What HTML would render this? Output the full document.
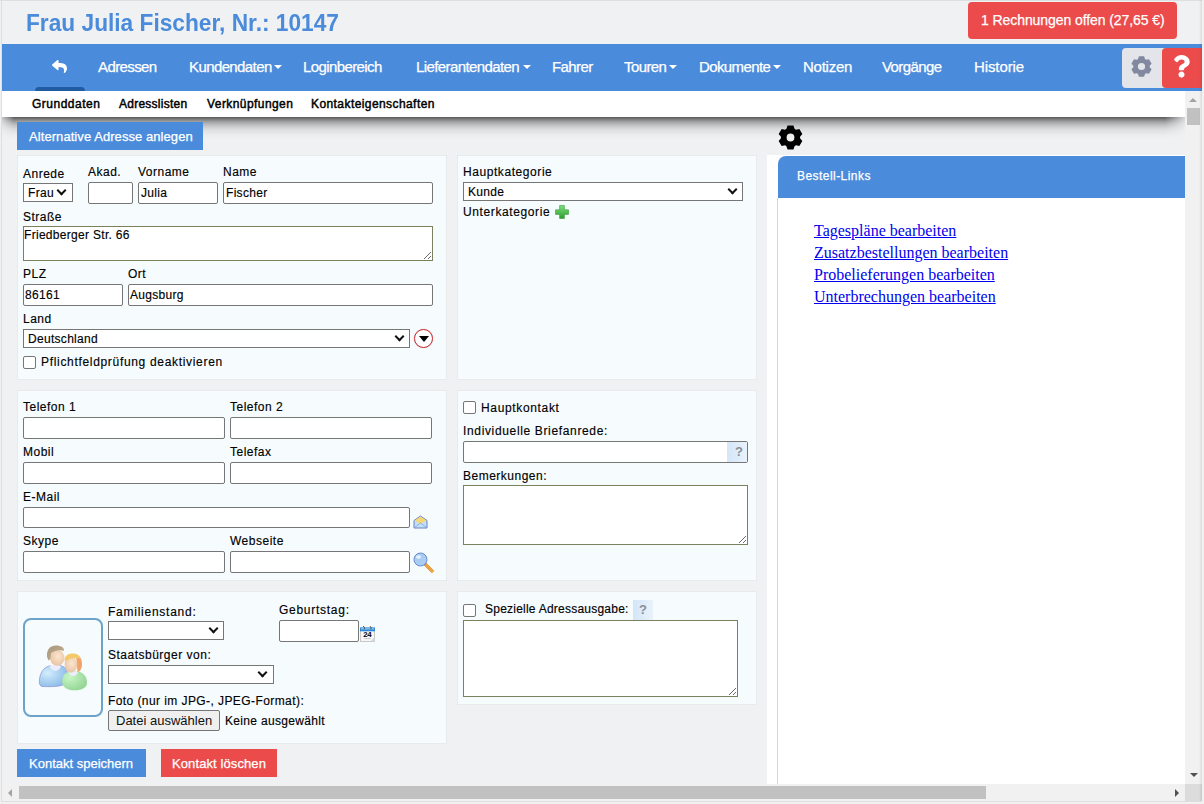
<!DOCTYPE html>
<html><head><meta charset="utf-8">
<style>
*{box-sizing:border-box}
html,body{margin:0;padding:0}
body{width:1204px;height:804px;overflow:hidden;position:relative;background:#f0f1f3;font-family:"Liberation Sans",sans-serif;color:#111}
.a{position:absolute}
.t{position:absolute;white-space:nowrap;line-height:14px;font-size:12px;letter-spacing:0.5px;color:#000;-webkit-text-stroke:0.15px #000}
.nav{position:absolute;top:59px;line-height:16px;font-size:15px;color:#fff;white-space:nowrap;letter-spacing:-0.6px;-webkit-text-stroke:0.25px #fff}
.sub{position:absolute;top:97px;line-height:14px;font-size:12px;font-weight:400;color:#000;white-space:nowrap;letter-spacing:0.25px;-webkit-text-stroke:0.45px #000}
.inp{position:absolute;background:#fff;border:1px solid #767676;border-radius:2px}
.sel{position:absolute;background:#fff;border:1px solid #767676}
.ta{position:absolute;background:#fff;border:1px solid #7b805f}
.panel{position:absolute;background:#f6fbfe;border:1px solid #e9eaeb}
.cb{position:absolute;width:13px;height:13px;border:1px solid #767676;border-radius:2px;background:#fff}
.caret{position:absolute;width:0;height:0;border-left:4px solid transparent;border-right:4px solid transparent;border-top:4px solid #fff}
.chev{position:absolute;width:7px;height:7px;border-right:2px solid #111;border-bottom:2px solid #111;transform:rotate(45deg)}
</style></head><body>
<!-- frame borders -->
<div class="a" style="left:0;top:0;width:1204px;height:1px;background:#dedfe1"></div>
<div class="a" style="left:1px;top:0;width:1px;height:804px;background:#dedede"></div>

<!-- header -->
<div class="a" style="left:26px;top:9px;font-size:24px;line-height:28px;font-weight:700;color:#4a8bdb;white-space:nowrap;transform:scaleX(0.946);transform-origin:0 0">Frau Julia Fischer, Nr.: 10147</div>
<div class="a" style="left:968px;top:2px;width:209px;height:37px;background:#eb4b4b;border-radius:4px"></div>
<div class="a" style="left:981px;top:12px;font-size:14px;line-height:16px;color:#fff;white-space:nowrap;letter-spacing:-0.08px;-webkit-text-stroke:0.25px #fff">1 Rechnungen offen (27,65 €)</div>

<!-- nav -->
<div class="a" style="left:2px;top:44px;width:1200px;height:47px;background:#4a8bdb"></div>
<div class="a" style="left:35px;top:87px;width:50px;height:4px;background:#215ca3;border-radius:4px 4px 0 0"></div>
<svg class="a" style="left:51.8px;top:59px" width="15" height="15" viewBox="0 0 512 512"><path fill="#fff" d="M8.309 189.836L184.313 37.851C199.719 24.546 224 35.347 224 56.015v80.053c160.629 1.839 288 34.032 288 186.258 0 61.441-39.581 122.309-83.333 154.132-13.653 9.931-33.111-2.533-28.077-18.631 45.344-145.012-21.507-183.51-176.59-185.742V360c0 20.7-24.3 31.453-39.687 18.164l-176.004-152c-11.071-9.562-11.086-26.753 0-36.328z"/></svg>
<div class="nav" style="left:98px">Adressen</div>
<div class="nav" style="left:189px">Kundendaten</div><div class="caret" style="left:274px;top:65px"></div>
<div class="nav" style="left:303px">Loginbereich</div>
<div class="nav" style="left:416px">Lieferantendaten</div><div class="caret" style="left:523px;top:65px"></div>
<div class="nav" style="left:552px">Fahrer</div>
<div class="nav" style="left:624px">Touren</div><div class="caret" style="left:669px;top:65px"></div>
<div class="nav" style="left:699px">Dokumente</div><div class="caret" style="left:773px;top:65px"></div>
<div class="nav" style="left:803px;letter-spacing:-0.25px">Notizen</div>
<div class="nav" style="left:882px">Vorgänge</div>
<div class="nav" style="left:974px;letter-spacing:-0.1px">Historie</div>
<div class="a" style="left:1122px;top:48px;width:44px;height:40px;background:#e4e5ea;border-radius:4px 0 0 4px"></div>
<svg class="a" style="left:1130.8px;top:56.1px" width="21" height="21" viewBox="0 0 21 21"><path fill-rule="evenodd" fill="#8288a0" d="M7.01 3.08 L7.93 0.32 L13.07 0.32 L13.99 3.08 L15.19 3.77 L18.03 3.18 L20.60 7.64 L18.67 9.81 L18.67 11.19 L20.60 13.36 L18.03 17.82 L15.19 17.23 L13.99 17.92 L13.07 20.68 L7.93 20.68 L7.01 17.92 L5.81 17.23 L2.97 17.82 L0.40 13.36 L2.33 11.19 L2.33 9.81 L0.40 7.64 L2.97 3.18 L5.81 3.77 Z M14.10 10.50 A3.6 3.6 0 1 0 6.90 10.50 A3.6 3.6 0 1 0 14.10 10.50 Z"/></svg>
<div class="a" style="left:1162px;top:48px;width:40px;height:40px;background:#eb4b4b;border-radius:4px 0 0 4px"></div>
<svg class="a" style="left:1172.6px;top:55.4px" width="17" height="22.7" viewBox="0 0 384 512" preserveAspectRatio="none"><path fill="#fff" d="M202.021 0C122.202 0 70.503 32.703 29.914 91.026c-7.363 10.58-5.093 25.086 5.178 32.874l43.138 32.709c10.373 7.865 25.132 6.026 33.253-4.148 25.049-31.381 43.63-49.449 82.757-49.449 30.764 0 68.816 19.799 68.816 49.631 0 22.552-18.617 34.134-48.993 51.164-35.423 19.86-82.299 44.576-82.299 106.405V320c0 13.255 10.745 24 24 24h72.471c13.255 0 24-10.745 24-24v-5.773c0-42.86 125.268-44.645 125.268-160.627C377.504 66.256 286.902 0 202.021 0zM192 373.459c-38.196 0-69.271 31.075-69.271 69.271 0 38.195 31.075 69.27 69.271 69.27s69.271-31.075 69.271-69.271-31.075-69.27-69.271-69.27z"/></svg>

<!-- subnav -->
<div class="a" style="left:2px;top:117px;width:1183px;height:22px;background:linear-gradient(to bottom,rgba(0,0,0,.63) 0px,rgba(0,0,0,.43) 3px,rgba(0,0,0,.28) 6px,rgba(0,0,0,.17) 9px,rgba(0,0,0,.07) 13px,rgba(0,0,0,.02) 18px,rgba(0,0,0,0) 22px);-webkit-mask-image:linear-gradient(to right,rgba(0,0,0,.3) 0px,#000 12px,#000 1163px,rgba(0,0,0,.2) 1183px)"></div>
<div class="a" style="left:2px;top:91px;width:1183px;height:26px;background:#fff"></div>
<div class="sub" style="left:32px;letter-spacing:0.5px">Grunddaten</div>
<div class="sub" style="left:119px">Adresslisten</div>
<div class="sub" style="left:207px;letter-spacing:0.43px">Verknüpfungen</div>
<div class="sub" style="left:311px;letter-spacing:0.42px">Kontakteigenschaften</div>


<!-- content -->
<div class="a" style="left:17px;top:122px;width:186px;height:28px;background:#4a8bdb"></div>
<div class="a" style="left:29px;top:129px;font-size:13px;line-height:16px;color:#fff;white-space:nowrap;letter-spacing:0.07px;-webkit-text-stroke:0.25px #fff">Alternative Adresse anlegen</div>

<!-- panel 1 -->
<div class="panel" style="left:17px;top:155px;width:430px;height:225px"></div>
<div class="t" style="left:23px;top:167px">Anrede</div>
<div class="t" style="left:88px;top:165px">Akad.</div>
<div class="t" style="left:138px;top:165px">Vorname</div>
<div class="t" style="left:223px;top:165px">Name</div>
<div class="sel" style="left:23px;top:183px;width:50px;height:19px"></div>
<div class="t" style="left:28px;top:186px;letter-spacing:0.3px">Frau</div>
<div class="chev" style="left:58px;top:187px"></div>
<div class="inp" style="left:88px;top:182px;width:45px;height:22px"></div>
<div class="inp" style="left:138px;top:182px;width:80px;height:22px"></div>
<div class="t" style="left:141px;top:186px;letter-spacing:0.3px">Julia</div>
<div class="inp" style="left:223px;top:182px;width:210px;height:22px"></div>
<div class="t" style="left:226px;top:186px;letter-spacing:0.3px">Fischer</div>
<div class="t" style="left:23px;top:210px">Straße</div>
<div class="ta" style="left:23px;top:226px;width:410px;height:35px"></div>
<div class="t" style="left:24px;top:228px;letter-spacing:0.3px">Friedberger Str. 66</div>
<div class="t" style="left:23px;top:267px">PLZ</div>
<div class="t" style="left:128px;top:267px">Ort</div>
<div class="inp" style="left:23px;top:284px;width:100px;height:22px"></div>
<div class="t" style="left:25px;top:288px;letter-spacing:0.3px">86161</div>
<div class="inp" style="left:128px;top:284px;width:305px;height:22px"></div>
<div class="t" style="left:130px;top:288px;letter-spacing:0.3px">Augsburg</div>
<div class="t" style="left:23px;top:312px">Land</div>
<div class="sel" style="left:23px;top:329px;width:387px;height:19px"></div>
<div class="t" style="left:28px;top:332px;letter-spacing:0.3px">Deutschland</div>
<div class="chev" style="left:396px;top:333px"></div>
<div class="a" style="left:414px;top:329px;width:19px;height:19px;border:1.6px solid #d42a2e;border-radius:50%;background:#fff;box-shadow:0 0 1px rgba(0,0,0,.3)"></div>
<div class="a" style="left:418.5px;top:335.5px;width:0;height:0;border-left:5px solid transparent;border-right:5px solid transparent;border-top:6.5px solid #000"></div>
<div class="cb" style="left:23px;top:356px"></div>
<div class="t" style="left:41px;top:355px;letter-spacing:0.68px">Pflichtfeldprüfung deaktivieren</div>

<!-- panel 2 -->
<div class="panel" style="left:457px;top:155px;width:300px;height:225px"></div>
<div class="t" style="left:463px;top:165px;letter-spacing:0.57px">Hauptkategorie</div>
<div class="sel" style="left:463px;top:182px;width:280px;height:19px"></div>
<div class="t" style="left:468px;top:185px;letter-spacing:0.3px">Kunde</div>
<div class="chev" style="left:729px;top:186px"></div>
<div class="t" style="left:463px;top:205px;letter-spacing:0.61px">Unterkategorie</div>
<svg class="a" style="left:555px;top:205px" width="14" height="14" viewBox="0 0 14 14"><defs><linearGradient id="gp" x1="0" y1="0" x2="0" y2="1"><stop offset="0" stop-color="#7ee07e"/><stop offset="1" stop-color="#2c9c2c"/></linearGradient></defs><path d="M4.6 0.5h4.8v4.3h4.1v4.6h-4.1v4.1h-4.8v-4.1h-4.1v-4.6h4.1z" fill="url(#gp)" stroke="#3a9a3a" stroke-width="0.6"/></svg>

<!-- panel 3 -->
<div class="panel" style="left:17px;top:390px;width:430px;height:191px"></div>
<div class="t" style="left:23px;top:400px">Telefon 1</div>
<div class="t" style="left:230px;top:400px">Telefon 2</div>
<div class="inp" style="left:23px;top:417px;width:202px;height:22px"></div>
<div class="inp" style="left:230px;top:417px;width:202px;height:22px"></div>
<div class="t" style="left:23px;top:445px">Mobil</div>
<div class="t" style="left:230px;top:445px">Telefax</div>
<div class="inp" style="left:23px;top:462px;width:202px;height:22px"></div>
<div class="inp" style="left:230px;top:462px;width:202px;height:22px"></div>
<div class="t" style="left:23px;top:490px">E-Mail</div>
<div class="inp" style="left:23px;top:507px;width:387px;height:21px"></div>
<div class="t" style="left:23px;top:534px">Skype</div>
<div class="t" style="left:230px;top:534px">Webseite</div>
<div class="inp" style="left:23px;top:551px;width:202px;height:22px"></div>
<div class="inp" style="left:230px;top:551px;width:180px;height:22px"></div>

<!-- panel 4 -->
<div class="panel" style="left:457px;top:390px;width:300px;height:191px"></div>
<div class="cb" style="left:463px;top:401px"></div>
<div class="t" style="left:481px;top:401px;letter-spacing:0.65px">Hauptkontakt</div>
<div class="t" style="left:463px;top:424px;letter-spacing:0.65px">Individuelle Briefanrede:</div>
<div class="inp" style="left:463px;top:441px;width:285px;height:22px"></div>
<div class="a" style="left:727px;top:442px;width:20px;height:20px;background:linear-gradient(90deg,#d3e6f7,#e9f2fb)"></div>
<div class="a" style="left:729px;top:444px;width:20px;text-align:center;font-size:13px;line-height:16px;font-weight:700;color:#8a8f96">?</div>
<div class="t" style="left:463px;top:469px">Bemerkungen:</div>
<div class="ta" style="left:463px;top:485px;width:285px;height:60px"></div>

<!-- panel 5 -->
<div class="panel" style="left:17px;top:591px;width:430px;height:153px"></div>
<div class="a" style="left:23px;top:618px;width:80px;height:99px;border:2px solid #6ba3c9;border-radius:8px"></div>
<div class="t" style="left:108px;top:605px;letter-spacing:0.75px">Familienstand:</div>
<div class="sel" style="left:108px;top:621px;width:116px;height:19px"></div>
<div class="chev" style="left:210px;top:625px"></div>
<div class="t" style="left:279px;top:603px;letter-spacing:0.73px">Geburtstag:</div>
<div class="inp" style="left:279px;top:620px;width:80px;height:22px"></div>
<div class="t" style="left:108px;top:648px">Staatsbürger von:</div>
<div class="sel" style="left:108px;top:665px;width:166px;height:19px"></div>
<div class="chev" style="left:259px;top:669px"></div>
<div class="t" style="left:108px;top:694px;letter-spacing:0.42px">Foto (nur im JPG-, JPEG-Format):</div>
<div class="a" style="left:108px;top:710px;width:112px;height:21px;background:#efefef;border:1px solid #767676;border-radius:2px"></div>
<div class="a" style="left:116px;top:713px;font-size:13px;line-height:16px;color:#111;white-space:nowrap">Datei auswählen</div>
<div class="t" style="left:225px;top:714px;letter-spacing:0.33px">Keine ausgewählt</div>

<!-- panel 6 -->
<div class="panel" style="left:457px;top:591px;width:300px;height:114px"></div>
<div class="cb" style="left:463px;top:604px"></div>
<div class="t" style="left:485px;top:602px;letter-spacing:0.23px">Spezielle Adressausgabe:</div>
<div class="a" style="left:633px;top:600px;width:20px;height:20px;background:linear-gradient(90deg,#d3e6f7,#e9f2fb)"></div>
<div class="a" style="left:633px;top:602px;width:20px;text-align:center;font-size:13px;line-height:16px;font-weight:700;color:#8a8f96">?</div>
<div class="ta" style="left:463px;top:620px;width:275px;height:77px"></div>


<!-- icons -->
<svg class="a" style="left:36px;top:642px" width="54" height="52" viewBox="0 0 54 52">
<defs>
<radialGradient id="gb" cx="0.3" cy="0.35" r="0.85"><stop offset="0" stop-color="#d2eefc"/><stop offset="1" stop-color="#80b2e4"/></radialGradient>
<radialGradient id="gg" cx="0.3" cy="0.3" r="0.9"><stop offset="0" stop-color="#c6f6c6"/><stop offset="1" stop-color="#8ccf8c"/></radialGradient>
<radialGradient id="gf" cx="0.55" cy="0.4" r="0.7"><stop offset="0" stop-color="#fce6d0"/><stop offset="1" stop-color="#e6bf9c"/></radialGradient>
<linearGradient id="gh" x1="0" y1="0" x2="1" y2="1"><stop offset="0" stop-color="#a99880"/><stop offset="1" stop-color="#c4b090"/></linearGradient>
</defs>
<path d="M3.3 40 C3.3 31, 8 24.5, 15 23.5 L24 23.5 C31 24.5, 33 31, 31 40 C28 44.5, 18 45, 6 44.5 C4 44, 3.3 42, 3.3 40 Z" fill="url(#gb)" stroke="#8c90d4" stroke-width="0.7"/>
<path d="M13.5 24 C15 29, 22 31.5, 25 24.5 L23 23 L15 23 Z" fill="#eceefe"/>
<ellipse cx="21.3" cy="15.8" rx="7.2" ry="8" fill="url(#gf)"/>
<path d="M11 15 C10.5 7, 14.5 3.6, 20 3.6 C25.5 3.6, 28.3 6, 28 9 C24.5 7.5, 18 8.5, 15 11.5 L14.5 17 L12.5 18.5 Z" fill="url(#gh)"/>
<path d="M26.2 40 C26 33, 30 29.5, 35 29.5 L42 29.5 C48 30.5, 51 35, 51 41 C51 45.5, 46 48.3, 38.5 48.3 C31 48.3, 26.2 45, 26.2 40 Z" fill="url(#gg)"/>
<path d="M32.5 30 C33.5 35, 40 35.5, 42 30.5 L40 29.5 L34 29.5 Z" fill="#eceefe"/>
<path d="M39.5 13 C44 13.5, 46 17, 46 22 C46 26.5, 44 30, 41.5 30 L40.5 18 Z" fill="#f2a468"/>
<ellipse cx="34.9" cy="22.7" rx="6.3" ry="8" fill="url(#gf)"/>
<path d="M28.6 18.5 C28.6 14, 32 11.6, 36.5 11.6 C41 11.6, 44 13.5, 44 16.5 C40 15.5, 34 15.5, 29 19.5 Z" fill="#f5c86a"/>
</svg>
<svg class="a" style="left:413px;top:515px" width="15" height="14" viewBox="0 0 15 14">
<path d="M1 5.5 L7.5 1 L14 5.5 L14 13 L1 13 Z" fill="#bfe0f8" stroke="#6b82c2" stroke-width="1"/>
<path d="M1.5 5.5 L7.5 1.5 L13.5 5.5 L7.5 9 Z" fill="#f7d774"/>
<path d="M1.5 12.5 L7.5 8 L13.5 12.5" fill="none" stroke="#8aa0d8" stroke-width="0.8"/>
</svg>
<svg class="a" style="left:413px;top:552px" width="22" height="22" viewBox="0 0 22 22">
<line x1="12" y1="12" x2="19.5" y2="19.5" stroke="#555" stroke-width="3"/>
<line x1="13.5" y1="13.5" x2="19" y2="19" stroke="#f0a53a" stroke-width="3.2" stroke-linecap="square"/>
<circle cx="7.5" cy="7.5" r="6.5" fill="#a9cdf2" stroke="#6a8ad0" stroke-width="1"/>
<ellipse cx="5.5" cy="5" rx="2.5" ry="1.8" fill="#e6f2fd"/>
</svg>
<svg class="a" style="left:360px;top:626px" width="15" height="16" viewBox="0 0 15 16">
<rect x="0.5" y="2" width="14" height="13.5" fill="#f6f6f6" stroke="#bdbdbd" stroke-width="0.8"/>
<rect x="0" y="1.5" width="15" height="3.8" fill="#2a88d8"/>
<rect x="1" y="2.2" width="13" height="1.3" fill="#8ec8f4"/>
<text x="7.3" y="10.8" text-anchor="middle" font-family="Liberation Sans" font-weight="700" font-size="7.8" fill="#000" letter-spacing="-0.3">24</text>
<line x1="4.5" y1="12.6" x2="10.5" y2="12.6" stroke="#777" stroke-width="0.6" stroke-dasharray="1 0.6"/>
<path d="M10.5 15.3 L14.3 11.5 L14.3 15.3 Z" fill="#d8d8d8"/>
<path d="M3.2 0.3 C4.5 0.5, 4.6 2, 4.3 3.2" fill="none" stroke="#333" stroke-width="0.9"/>
<path d="M9.8 0.3 C11.1 0.5, 11.2 2, 10.9 3.2" fill="none" stroke="#333" stroke-width="0.9"/>
</svg>
<!-- textarea resize handles -->
<svg class="a" style="left:422px;top:250px" width="10" height="10"><path d="M9 2 L2 9 M9 6 L6 9" stroke="#6a6a6a" stroke-width="1"/></svg>
<svg class="a" style="left:737px;top:534px" width="10" height="10"><path d="M9 2 L2 9 M9 6 L6 9" stroke="#6a6a6a" stroke-width="1"/></svg>
<svg class="a" style="left:727px;top:686px" width="10" height="10"><path d="M9 2 L2 9 M9 6 L6 9" stroke="#6a6a6a" stroke-width="1"/></svg>

<!-- bottom buttons -->
<div class="a" style="left:17px;top:749px;width:129px;height:28px;background:#4a8bdb"></div>
<div class="a" style="left:29px;top:756px;font-size:13px;line-height:16px;color:#fff;white-space:nowrap;-webkit-text-stroke:0.25px #fff">Kontakt speichern</div>
<div class="a" style="left:161px;top:749px;width:116px;height:28px;background:#eb4b4b"></div>
<div class="a" style="left:172px;top:756px;font-size:13px;line-height:16px;color:#fff;white-space:nowrap;letter-spacing:0.1px;-webkit-text-stroke:0.25px #fff">Kontakt löschen</div>

<!-- right panel -->
<svg class="a" style="left:777.5px;top:124.7px" width="25" height="25" viewBox="0 0 25 25"><path fill-rule="evenodd" fill="#000" d="M8.43 3.80 L9.53 0.56 L15.47 0.56 L16.57 3.80 L18.00 4.63 L21.35 3.96 L24.32 9.10 L22.06 11.67 L22.06 13.33 L24.32 15.90 L21.35 21.04 L18.00 20.37 L16.57 21.20 L15.47 24.44 L9.53 24.44 L8.43 21.20 L7.00 20.37 L3.65 21.04 L0.68 15.90 L2.94 13.33 L2.94 11.67 L0.68 9.10 L3.65 3.96 L7.00 4.63 Z M16.40 12.50 A3.9 3.9 0 1 0 8.60 12.50 A3.9 3.9 0 1 0 16.40 12.50 Z"/></svg>
<div class="a" style="left:767px;top:155px;width:418px;height:629px;background:#fff"></div>
<div class="a" style="left:777px;top:198px;width:408px;height:586px;border-left:1px solid #d5d5d5"></div>
<div class="a" style="left:778px;top:156px;width:407px;height:42px;background:#4a8bdb;border-radius:8px 0 0 0"></div>
<div class="a" style="left:797px;top:169px;font-size:12px;line-height:14px;color:#fff;white-space:nowrap;letter-spacing:0.45px;-webkit-text-stroke:0.25px #fff">Bestell-Links</div>
<div class="a" style="left:814px;top:220px;font-family:'Liberation Serif',serif;font-size:16px;line-height:22px;color:#0000ee;text-decoration:underline;white-space:nowrap">Tagespläne bearbeiten<br>Zusatzbestellungen bearbeiten<br>Probelieferungen bearbeiten<br>Unterbrechungen bearbeiten</div>

<!-- scrollbars -->
<div class="a" style="left:1185px;top:91px;width:17px;height:693px;background:#f1f1f1"></div>
<div class="a" style="left:1189px;top:98px;width:0;height:0;border-left:4px solid transparent;border-right:4px solid transparent;border-bottom:4px solid #a3a3a3"></div>
<div class="a" style="left:1187px;top:108px;width:13px;height:17px;background:#c1c1c1"></div>
<div class="a" style="left:1190px;top:773px;width:0;height:0;border-left:4px solid transparent;border-right:4px solid transparent;border-top:4px solid #505050"></div>
<div class="a" style="left:2px;top:784px;width:1183px;height:17px;background:#f1f1f1"></div>
<div class="a" style="left:8px;top:789px;width:0;height:0;border-top:4px solid transparent;border-bottom:4px solid transparent;border-right:4px solid #a3a3a3"></div>
<div class="a" style="left:19px;top:786px;width:967px;height:13px;background:#c1c1c1"></div>
<div class="a" style="left:1175px;top:789px;width:0;height:0;border-top:4px solid transparent;border-bottom:4px solid transparent;border-left:4px solid #505050"></div>
<div class="a" style="left:1185px;top:784px;width:17px;height:17px;background:#dcdcdc"></div>
<div class="a" style="left:1199px;top:0px;width:3px;height:801px;background:linear-gradient(to right,rgba(0,0,0,0),rgba(0,0,0,.09))"></div>
<div class="a" style="left:1202px;top:0;width:2px;height:804px;background:#f1f1f1"></div>
<div class="a" style="left:0;top:801px;width:1204px;height:3px;background:#f1f1f1"></div>
<div class="a" style="left:1px;top:801px;width:1201px;height:1px;background:#dedede"></div>

</body></html>
